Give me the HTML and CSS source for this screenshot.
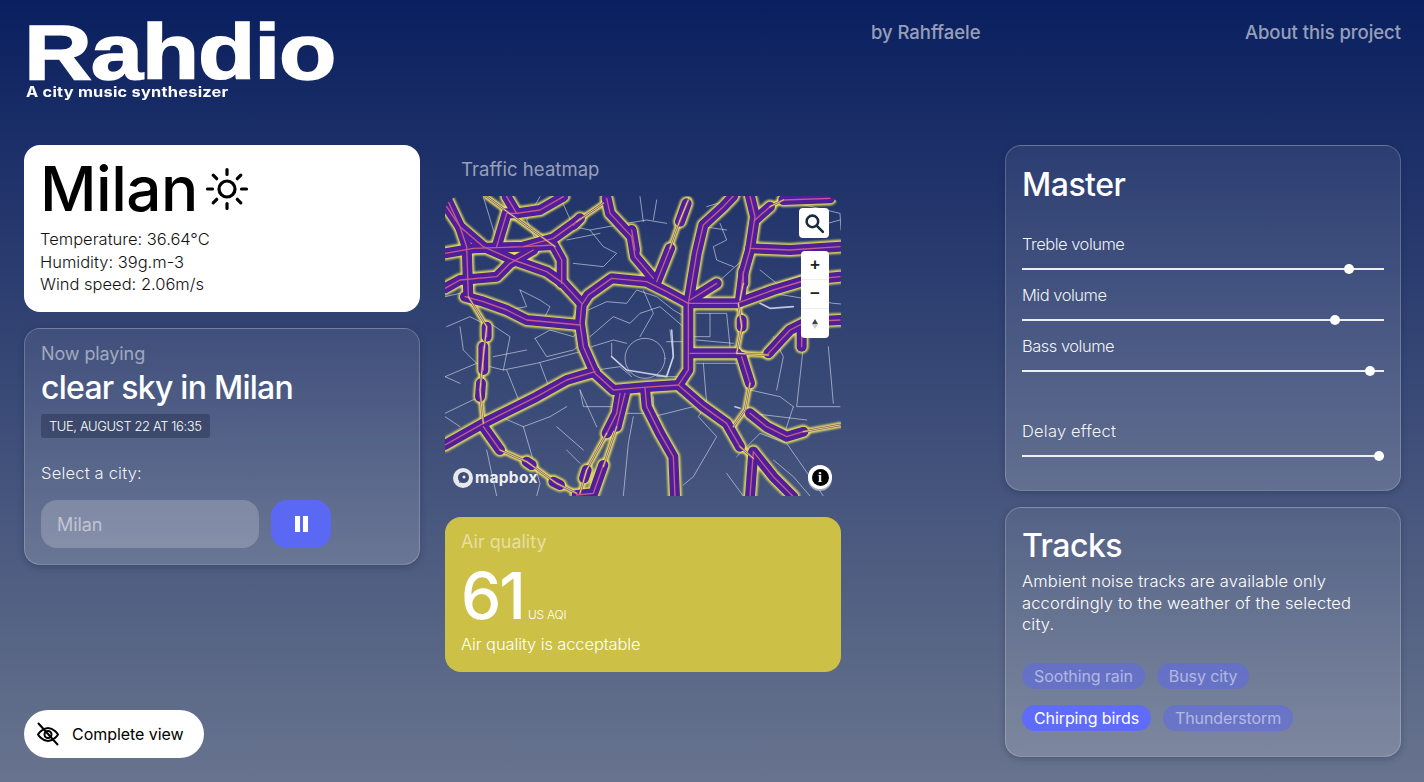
FILE: index.html
```html
<!DOCTYPE html>
<html lang="en">
<head>
    <meta charset="UTF-8">
    <title>Rahdio</title>
    <link rel="stylesheet" href="styles.css">
</head>
<body>
    <header class="top-bar">
        <div class="logo">
            <h1 class="logo-title">Rahdio</h1>
            <p class="logo-sub">A city music synthesizer</p>
        </div>
        <a class="top-link top-link-by">by Rahffaele</a>
        <a class="top-link top-link-about">About this project</a>
    </header>

    <main class="columns">
        <section class="column column-left">
            <div class="weather-card">
                <div class="weather-head">
                    <h2 class="weather-city">Milan</h2>
                    <svg class="sun-icon" viewBox="0 0 44 44" fill="none" stroke="#000" stroke-width="3.200" stroke-linecap="round">
                        <circle cx="22" cy="22" r="8"/>
                        <path d="M22 2.500v5M22 36.500v5M2.500 22h5M36.500 22h5M8.200 8.200l3.500 3.500M32.300 32.300l3.500 3.500M8.200 35.800l3.500-3.500M32.300 11.700l3.500-3.500"/>
                    </svg>
                </div>
                <p class="weather-line">Temperature: 36.64°C</p>
                <p class="weather-line">Humidity: 39g.m-3</p>
                <p class="weather-line">Wind speed: 2.06m/s</p>
            </div>

            <div class="glass-card playing-card">
                <p class="card-label">Now playing</p>
                <h2 class="playing-title">clear sky in Milan</h2>
                <span class="date-badge">Tue, August 22 at 16:35</span>
                <label class="city-label" for="city-input">Select a city:</label>
                <div class="city-row">
                    <input class="city-input" id="city-input" type="text" value="Milan">
                    <button class="pause-button" aria-label="Pause">
                        <svg viewBox="0 0 13 16" width="13" height="16" fill="#fff"><rect x="0" y="0" width="5" height="16"/><rect x="8" y="0" width="5" height="16"/></svg>
                    </button>
                </div>
            </div>

            <button class="view-button">
                <svg viewBox="0 0 24 24" width="24" height="24" fill="none" stroke="#000" stroke-width="2" stroke-linecap="round" stroke-linejoin="round">
                    <path d="M2 12.500S6 6 12 6s10 6.500 10 6.500S18 19 12 19 2 12.500 2 12.500z"/>
                    <circle cx="12" cy="12.500" r="3.500"/>
                    <path d="M2.500 1.500l19 21"/>
                </svg>
                Complete view
            </button>
        </section>

        <section class="column column-center">
            <p class="map-label">Traffic heatmap</p>
            <div class="map">
                <svg class="map-svg" viewBox="15 138 1188 900" preserveAspectRatio="none">
                    <defs>
                        <filter id="soft" x="-5%" y="-5%" width="110%" height="110%"><feGaussianBlur stdDeviation="3.500"/></filter>
                        <g id="major">
                            <path d="M425 465L445 435L515 385L620 395L680 425L745 460L745 610L745 660L715 705L610 712L520 720L465 670L430 590L420 520Z"/>
                            <path d="M745 460L770 310L790 225L850 170L880 138"/>
                            <path d="M425 460L370 400L320 365L220 330L130 290L60 230L20 170"/>
                            <path d="M420 525L260 510L200 480L130 455L75 440"/>
                            <path d="M745 460L890 460L1000 420L1100 390L1200 380"/>
                            <path d="M750 450L830 400"/>
                            <path d="M750 610L890 610"/>
                            <path d="M465 665L380 690L290 740L130 820L15 885"/>
                            <path d="M900 450L910 370L930 300L945 200L930 138"/>
                            <path d="M930 295L1050 300L1200 290"/>
                            <path d="M945 210L990 170"/>
                            <path d="M1030 150L1170 145"/>
                            <path d="M15 310L100 295L250 290L340 265L410 215"/>
                            <path d="M250 290L340 285L365 330L365 400"/>
                            <path d="M15 415L60 390L170 380L210 340L280 300"/>
                            <path d="M200 140L230 190L300 180L370 140"/>
                            <path d="M170 290L200 190L235 190"/>
                            <path d="M20 145L60 230L80 290L85 440"/>
                            <path d="M640 385L585 320L575 260L510 190L500 145"/>
                            <path d="M650 395L690 295"/>
                            <path d="M540 730L530 790L500 850"/>
                            <path d="M555 730L530 830"/>
                            <path d="M615 715L620 770L660 850L700 920L705 1040"/>
                            <path d="M715 705L790 770L860 820L900 890"/>
                            <path d="M940 905L930 1040"/>
                            <path d="M940 905L1000 980L1060 1040"/>
                            <path d="M905 620L930 700"/>
                            <path d="M930 790L980 830L1040 860L1090 845"/>
                            <path d="M985 610L1050 540L1100 515L1200 510"/>
                            <path d="M1085 545L1085 590"/>
                            <path d="M130 830L180 900"/>
                            <path d="M140 530L140 560"/>
                            <path d="M130 590L130 660"/>
                            <path d="M905 510L905 530"/>
                            <path d="M910 365L910 400"/>
                            <path d="M575 240L585 300"/>
                            <path d="M490 945L460 1030L410 1035"/>
                            <path d="M720 215L740 160"/>
                            <path d="M400 225L420 205"/>
                            <path d="M123 700L120 740"/>
                            <path d="M440 960L432 985"/>
                            <path d="M260 935L275 945"/>
                            <path d="M340 995L360 1005"/>
                        </g>
                        <g id="minor">
                            <path d="M895 460L905 530L890 610"/>
                            <path d="M890 610L985 615"/>
                            <path d="M690 295L720 210L745 150"/>
                            <path d="M85 440L140 530L130 620L120 720L130 820"/>
                            <path d="M180 900L260 935L350 1000L410 1030"/>
                            <path d="M500 850L440 960L420 1030"/>
                            <path d="M530 830L490 950"/>
                            <path d="M930 700L915 780L880 830"/>
                            <path d="M1090 845L1200 825"/>
                            <path d="M410 215L490 160"/>
                            <path d="M140 140L345 290"/>
                            <path d="M900 890L940 925"/>
                            <path d="M990 170L1030 150"/>
                            <path d="M910 400L900 450"/>
                        </g>
                    </defs>

                    <g class="road-net">
                        <circle cx="615" cy="625" r="60"/>
                        <path d="M445 480L500 455L560 460L590 420L650 440L700 480L735 500"/>
                        <path d="M450 560L520 500L570 520L600 490L660 470L730 530"/>
                        <path d="M455 590L520 570L560 580M680 575L740 575M610 420L640 490L600 560"/>
                        <path d="M470 660L540 650L575 680M650 680L720 680M690 540L700 620L680 675"/>
                        <path d="M515 580L515 620L570 670"/>
                        <path d="M240 420L300 450L330 470L310 510M285 565L320 620L360 610L400 600L440 570"/>
                        <path d="M15 680L110 640L190 660L290 640L440 600M200 660L240 760L290 740"/>
                        <path d="M285 565L330 540L400 560L430 530M300 640L330 720L420 690"/>
                        <path d="M20 530L90 500L130 520M60 530L70 600L110 640M150 520L210 560L190 660"/>
                        <path d="M140 730L15 790M180 800L250 830L330 800L380 770M250 830L300 1000L290 1038"/>
                        <path d="M420 720L430 770L540 770M15 800L60 830M140 900L170 1038"/>
                        <path d="M360 140L400 230L450 240L490 290L530 310L490 350L400 340"/>
                        <path d="M450 240L560 220L620 210L680 220M380 270L480 250M130 140L175 290"/>
                        <path d="M580 800L565 880L550 1038M640 210L650 150M610 215L600 140"/>
                        <path d="M790 640L800 760L775 800L830 860L760 980L730 1005"/>
                        <path d="M840 220L860 270L820 290L830 330L880 350M790 230L860 240"/>
                        <path d="M960 360L1010 400L1100 370M1000 430L1180 460L1203 462"/>
                        <path d="M1090 590L1070 770L1200 770M1060 770L1030 860M1165 590L1180 760"/>
                        <path d="M930 720L1020 740L1060 770M935 790L1100 810M890 920L960 850L1040 880L1150 1038"/>
                        <path d="M860 970L910 1038M1000 930L1060 980L1110 1038M770 490L860 490L870 590M770 570L880 580"/>
                        <path d="M640 800L760 770M800 170L900 140M830 400L930 310"/>
                        <path d="M1030 150L1200 190L1203 240M1090 240L1200 210"/>
                        <path d="M240 420L260 470L200 480M440 430L400 500M60 430L15 440M160 620L260 600M60 700L15 680"/>
                        <path d="M760 560L810 560L810 490M770 640L890 640M640 740L640 790L560 790M380 900L420 940"/>
                        <path d="M300 140L260 210L300 300M470 830L420 720M350 830L430 900M1000 560L1030 620L1010 720"/>
                    </g>
                    <g class="road-bright">
                        <path d="M960 460L990 475L1060 470M185 287L240 285M885 770L900 775M515 620L560 660L680 680L700 620L695 540"/>
                    </g>

                    <use href="#major" class="heat-glow"/>
                    <use href="#minor" class="heat-glow-thin"/>
                    <use href="#major" class="heat-body"/>
                    <use href="#minor" class="heat-body-thin"/>
                    <use href="#major" class="heat-core"/>
                    <use href="#minor" class="heat-core-thin"/>
                </svg>

                <button class="map-button map-search" aria-label="Search">
                    <svg viewBox="0 0 20 20" width="21" height="21" fill="none" stroke="#1a2a3c" stroke-width="2.400" stroke-linecap="round"><circle cx="8" cy="8" r="5.500"/><path d="M12.500 12.500L18 18"/></svg>
                </button>
                <div class="map-zoom">
                    <button class="map-zoom-button">+</button>
                    <button class="map-zoom-button">−</button>
                    <button class="map-zoom-button map-compass" aria-label="Compass"><span class="compass-up"></span><span class="compass-down"></span></button>
                </div>
                <div class="mapbox-mark">
                    <svg viewBox="0 0 20 20" width="20" height="20"><circle cx="10" cy="10" r="10" fill="#e8e8ec"/><circle cx="10.500" cy="9.500" r="5.500" fill="#3e4e78"/><path d="M6 15l1.500-5 3.500 3z" fill="#3e4e78"/><circle cx="11" cy="9" r="1.500" fill="#e8e8ec"/></svg>
                    <span class="mapbox-text">mapbox</span>
                </div>
                <div class="map-info">
                    <span class="map-info-dot">i</span>
                </div>
            </div>

            <div class="air-card">
                <p class="air-label">Air quality</p>
                <div class="air-value-row">
                    <span class="air-value">61</span>
                    <span class="air-unit">US AQI</span>
                </div>
                <p class="air-text">Air quality is acceptable</p>
            </div>
        </section>

        <section class="column column-right">
            <div class="glass-card master-card">
                <h2 class="panel-title">Master</h2>
                <label class="slider-label">Treble volume</label>
                <input class="slider" type="range" min="0" max="100" step="0.5" value="91.5">
                <label class="slider-label">Mid volume</label>
                <input class="slider" type="range" min="0" max="100" step="0.5" value="87.5">
                <label class="slider-label">Bass volume</label>
                <input class="slider" type="range" min="0" max="100" step="0.5" value="97.5">
                <label class="slider-label slider-label-delay">Delay effect</label>
                <input class="slider" type="range" min="0" max="100" step="0.5" value="100">
            </div>

            <div class="glass-card tracks-card">
                <h2 class="panel-title">Tracks</h2>
                <p class="tracks-text">Ambient noise tracks are available only accordingly to the weather of the selected city.</p>
                <div class="chips">
                    <span class="chip">Soothing rain</span>
                    <span class="chip">Busy city</span>
                    <span class="chip chip-active">Chirping birds</span>
                    <span class="chip">Thunderstorm</span>
                </div>
            </div>
        </section>
    </main>
</body>
</html>
```

FILE: styles.css
```css
* {
    margin: 0;
    padding: 0;
    box-sizing: border-box;
}

html, body {
    height: 782px;
    overflow: hidden;
}

body {
    font-family: Inter, "Noto Sans", sans-serif;
    color: #ffffff;
    background: linear-gradient(180deg, #0a1f5f 0%, #68748e 100%);
    padding: 0 23px 24px 24px;
    display: flex;
    flex-direction: column;
}

.top-bar {
    display: flex;
    align-items: flex-start;
    height: 145px;
}

.logo {
    width: 312px;
    padding: 22px 0 0 0;
}

.logo-title {
    font-family: "Liberation Sans", sans-serif;
    font-size: 78px;
    line-height: 60px;
    font-weight: 700;
    letter-spacing: -1px;
    -webkit-text-stroke: 1.500px #ffffff;
    transform: scaleX(1.205);
    transform-origin: left top;
    white-space: nowrap;
}

.logo-sub {
    margin-top: 2px;
    margin-left: 2px;
    font-size: 14px;
    line-height: 16px;
    font-weight: 700;
    letter-spacing: 0.2px;
    transform: scaleX(1.17);
    transform-origin: left top;
    white-space: nowrap;
}

.top-link {
    font-size: 18.500px;
    line-height: 24px;
    font-weight: 500;
    letter-spacing: -0.050px;
    color: rgba(255, 255, 255, 0.58);
    margin-top: 20px;
    white-space: nowrap;
}

.top-link-by {
    margin-left: 535px;
}

.top-link-about {
    margin-left: auto;
}

.columns {
    display: flex;
    flex: 1;
}

.column {
    width: 396px;
    display: flex;
    flex-direction: column;
}

.column-center {
    margin-left: 25px;
}

.column-right {
    margin-left: auto;
    gap: 16px;
}

.glass-card {
    border-radius: 16px;
    border: 1px solid rgba(255, 255, 255, 0.2);
    background: linear-gradient(180deg, rgba(255, 255, 255, 0.07), rgba(255, 255, 255, 0.16));
    box-shadow: 0 2px 6px rgba(20, 30, 60, 0.3);
}

/* left column */
.weather-card {
    height: 167px;
    background: #ffffff;
    border-radius: 16px;
    padding: 5px 16px;
    color: #000000;
}

.weather-head {
    display: flex;
    align-items: center;
    gap: 7px;
    height: 78px;
}

.weather-city {
    font-size: 62px;
    line-height: 78px;
    font-weight: 500;
    letter-spacing: -0.500px;
}

.sun-icon {
    width: 44px;
    height: 44px;
}

.weather-line {
    font-size: 16.500px;
    line-height: 22.500px;
    font-weight: 300;
    letter-spacing: 0;
    color: #111111;
}

.playing-card {
    height: 237px;
    margin-top: 16px;
    padding: 13px 16px;
}

.card-label {
    font-size: 18px;
    line-height: 24px;
    font-weight: 400;
    letter-spacing: -0.100px;
    color: rgba(255, 255, 255, 0.5);
}

.playing-title {
    margin-top: 1px;
    font-size: 32px;
    line-height: 42px;
    font-weight: 500;
    letter-spacing: -0.750px;
}

.date-badge {
    display: inline-block;
    margin-top: 5px;
    height: 24px;
    padding: 0 8px;
    border-radius: 3px;
    background: rgba(30, 40, 70, 0.4);
    font-size: 13px;
    line-height: 24px;
    font-weight: 300;
    letter-spacing: -0.400px;
    text-transform: uppercase;
}

.city-label {
    display: block;
    margin-top: 23px;
    font-size: 16.500px;
    line-height: 24px;
    font-weight: 300;
    letter-spacing: 0.200px;
    color: rgba(255, 255, 255, 0.95);
}

.city-row {
    display: flex;
    gap: 12px;
    margin-top: 15px;
}

.city-input {
    width: 218px;
    height: 48px;
    border: none;
    border-radius: 16px;
    padding: 0 16px;
    background: rgba(255, 255, 255, 0.2);
    color: rgba(255, 255, 255, 0.5);
    font-family: inherit;
    font-size: 18px;
    letter-spacing: -0.100px;
}

.pause-button {
    width: 60px;
    height: 48px;
    border: none;
    border-radius: 16px;
    background: #5b68f3;
    display: flex;
    align-items: center;
    justify-content: center;
}

.view-button {
    margin-top: auto;
    margin-bottom: 0;
    width: 180px;
    height: 48px;
    border: none;
    border-radius: 24px;
    background: #ffffff;
    color: #000000;
    font-family: inherit;
    font-size: 16px;
    letter-spacing: -0.050px;
    padding-left: 12px;
    display: flex;
    align-items: center;
    gap: 12px;
}

/* center column */
.map-label {
    font-size: 18.500px;
    line-height: 24px;
    font-weight: 400;
    letter-spacing: 0.050px;
    color: rgba(255, 255, 255, 0.55);
    padding: 12px 0 15px 16px;
}

.map {
    position: relative;
    height: 300px;
    border-radius: 16px;
    overflow: hidden;
}

.map-svg {
    display: block;
    width: 100%;
    height: 100%;
    fill: none;
    stroke-linecap: round;
    stroke-linejoin: round;
    filter: blur(0.4px);
}

.road-net {
    stroke: rgba(225, 230, 245, 0.7);
    stroke-width: 2.500;
}

.road-bright {
    stroke: rgba(215, 220, 240, 0.85);
    stroke-width: 5;
}

.heat-glow {
    stroke: #e8e258;
    stroke-width: 41;
    filter: url(#soft);
}

.heat-glow-thin {
    stroke: #f2ec58;
    stroke-width: 17;
    filter: url(#soft);
}

.heat-body {
    stroke: #4f1f9b;
    stroke-width: 30;
}

.heat-body-thin {
    stroke: #8a5488;
    stroke-width: 7;
}

.heat-core {
    stroke: #c65b8e;
    stroke-width: 4;
}

.heat-core-thin {
    stroke: #f2ec72;
    stroke-width: 2.500;
}

.map-button,
.map-zoom {
    position: absolute;
    background: #ffffff;
    border: none;
    border-radius: 4px;
}

.map-search {
    top: 12px;
    right: 12px;
    width: 30px;
    height: 30px;
    display: flex;
    align-items: center;
    justify-content: center;
}

.map-zoom {
    top: 55px;
    right: 12px;
    width: 28px;
    height: 87px;
    display: flex;
    flex-direction: column;
}

.map-zoom-button {
    height: 29px;
    border: none;
    border-bottom: 1px solid #eeeeee;
    background: none;
    color: #222222;
    font-family: "Liberation Sans", sans-serif;
    font-size: 17px;
    font-weight: 700;
}

.map-compass {
    border-bottom: none;
    display: flex;
    flex-direction: column;
    align-items: center;
    justify-content: center;
}

.compass-up,
.compass-down {
    width: 0;
    height: 0;
    border-left: 3px solid transparent;
    border-right: 3px solid transparent;
}

.compass-up {
    border-bottom: 5px solid #444444;
}

.compass-down {
    border-top: 5px solid #cccccc;
}

.mapbox-mark {
    position: absolute;
    left: 8px;
    bottom: 8px;
    display: flex;
    align-items: center;
    gap: 2px;
}

.mapbox-text {
    font-size: 15.500px;
    line-height: 20px;
    font-weight: 700;
    letter-spacing: 0.300px;
    color: #f0f0f4;
}

.map-info {
    position: absolute;
    right: 9px;
    bottom: 7px;
    width: 24px;
    height: 24px;
    border-radius: 50%;
    background: #ffffff;
    box-shadow: 0 2px 0 rgba(190, 190, 200, 0.8);
    display: flex;
    align-items: center;
    justify-content: center;
}

.map-info-dot {
    width: 17px;
    height: 17px;
    border-radius: 50%;
    background: #000000;
    color: #ffffff;
    font-family: "Liberation Serif", serif;
    font-size: 14px;
    font-weight: 700;
    line-height: 17px;
    text-align: center;
}

.air-card {
    height: 155px;
    margin-top: 21px;
    border-radius: 16px;
    background: #cdc046;
    padding: 13px 16px;
}

.air-label {
    font-size: 18px;
    line-height: 24px;
    letter-spacing: 0;
    color: rgba(255, 255, 255, 0.5);
}

.air-value-row {
    display: flex;
    align-items: baseline;
    gap: 4px;
    height: 68px;
    margin-top: 6px;
}

.air-value {
    font-size: 64px;
    line-height: 72px;
    font-weight: 500;
    letter-spacing: -2px;
}

.air-unit {
    font-size: 12px;
    font-weight: 300;
    letter-spacing: -0.200px;
}

.air-text {
    font-size: 16.500px;
    line-height: 24px;
    font-weight: 300;
    letter-spacing: -0.120px;
    margin-top: 4px;
}

/* right column */
.master-card {
    height: 346px;
    padding: 17px 16px 0;
}

.panel-title {
    font-size: 32px;
    line-height: 44px;
    font-weight: 500;
    letter-spacing: -0.500px;
}

.master-card .panel-title {
    margin-bottom: 25px;
}

.slider-label {
    display: block;
    font-size: 16.500px;
    line-height: 24px;
    font-weight: 300;
    letter-spacing: -0.500px;
    color: rgba(255, 255, 255, 0.95);
}

.slider-label-delay {
    margin-top: 43px;
    letter-spacing: 0.200px;
}

.slider {
    display: block;
    width: 100%;
    height: 10px;
    margin: 8px 0 9px;
    background: none;
    appearance: none;
    -webkit-appearance: none;
}

.slider::-webkit-slider-runnable-track {
    height: 2px;
    background: rgba(255, 255, 255, 0.9);
}

.slider::-webkit-slider-thumb {
    -webkit-appearance: none;
    width: 10px;
    height: 10px;
    margin-top: -4px;
    border-radius: 50%;
    background: #ffffff;
}

.tracks-card {
    height: 250px;
    padding: 16px 16px 0;
}

.tracks-text {
    font-size: 16.500px;
    line-height: 21.500px;
    font-weight: 300;
    letter-spacing: 0.150px;
    margin-top: 3px;
    width: 340px;
}

.chips {
    display: flex;
    flex-wrap: wrap;
    gap: 16px 12px;
    margin-top: 27px;
    width: 300px;
}

.chip {
    height: 26px;
    padding: 0 12px;
    border-radius: 13px;
    background: rgba(91, 104, 243, 0.5);
    color: rgba(255, 255, 255, 0.5);
    font-size: 16px;
    line-height: 26px;
    letter-spacing: -0.100px;
    white-space: nowrap;
}

.chip-active {
    background: #5e6cf9;
    color: #ffffff;
}
```
